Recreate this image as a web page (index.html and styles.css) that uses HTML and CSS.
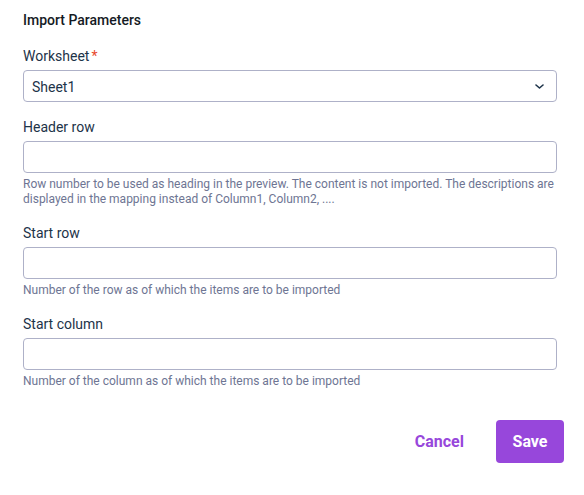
FILE: index.html
```html
<!DOCTYPE html>
<html>
<head>
<meta charset="utf-8">
<link rel="stylesheet" href="styles.css">
</head>
<body>
<div class="dialog">
  <div class="form">
    <h2 class="title">Import Parameters</h2>
    <div class="field">
      <label class="label">Worksheet<span class="req">*</span></label>
      <div class="select">
        <span class="select-value">Sheet1</span>
        <svg class="chevron" width="9" height="5" viewBox="0 0 9 5"><path d="M1 1 L4.5 4 L8 1" fill="none" stroke="#1d3349" stroke-width="1.6" stroke-linecap="round" stroke-linejoin="round"/></svg>
      </div>
    </div>
    <div class="field">
      <label class="label">Header row</label>
      <div class="input"></div>
      <p class="help">Row number to be used as heading in the preview. The content is not imported. The descriptions are displayed in the mapping instead of Column1, Column2, ....</p>
    </div>
    <div class="field">
      <label class="label">Start row</label>
      <div class="input"></div>
      <p class="help">Number of the row as of which the items are to be imported</p>
    </div>
    <div class="field">
      <label class="label">Start column</label>
      <div class="input"></div>
      <p class="help">Number of the column as of which the items are to be imported</p>
    </div>
  </div>
  <div class="footer">
    <button class="btn btn-text">Cancel</button>
    <button class="btn btn-primary">Save</button>
  </div>
</div>
</body>
</html>
```
FILE: styles.css
```css
* { box-sizing: border-box; }
html, body { margin: 0; padding: 0; background: #ffffff; }
body { font-family: Roboto, "Noto Sans", Arial, sans-serif; color: #1d3349; }
.dialog { width: 584px; height: 495px; display: flex; flex-direction: column; }
.form { padding: 12px 27px 0 23px; display: flex; flex-direction: column; }
.title { margin: 0 0 18px 0; font-size: 14px; line-height: 16px; font-weight: 500; color: #141a24; }
.field { display: flex; flex-direction: column; margin-bottom: 16px; }
.field:first-of-type { margin-bottom: 15px; }
.label { font-size: 14px; line-height: 20px; color: #1d3349; margin-bottom: 4px; }
.req { color: #e8492c; margin-left: 2px; }
.select, .input { height: 32px; border: 1px solid #aeb1c8; border-radius: 4px; background: #fff; }
.select { display: flex; align-items: center; justify-content: space-between; padding: 1px 12px 0 8px; }
.select-value { font-size: 14px; color: #1d3349; }
.chevron { display: block; }
.help { margin: 4px 0 0 0; font-size: 12px; line-height: 15px; color: #6e7593; }
.footer { display: flex; justify-content: flex-end; align-items: center; gap: 16px; padding: 15px 20px 0 0; }
.btn { font-family: Roboto, "Noto Sans", Arial, sans-serif; font-size: 16px; font-weight: 700; border: none; border-radius: 4px; height: 43px; cursor: pointer; }
.btn-text { background: transparent; color: #9747db; padding: 0 16px; }
.btn-primary { background: #9747db; color: #ffffff; width: 68px; padding: 0; }
```
